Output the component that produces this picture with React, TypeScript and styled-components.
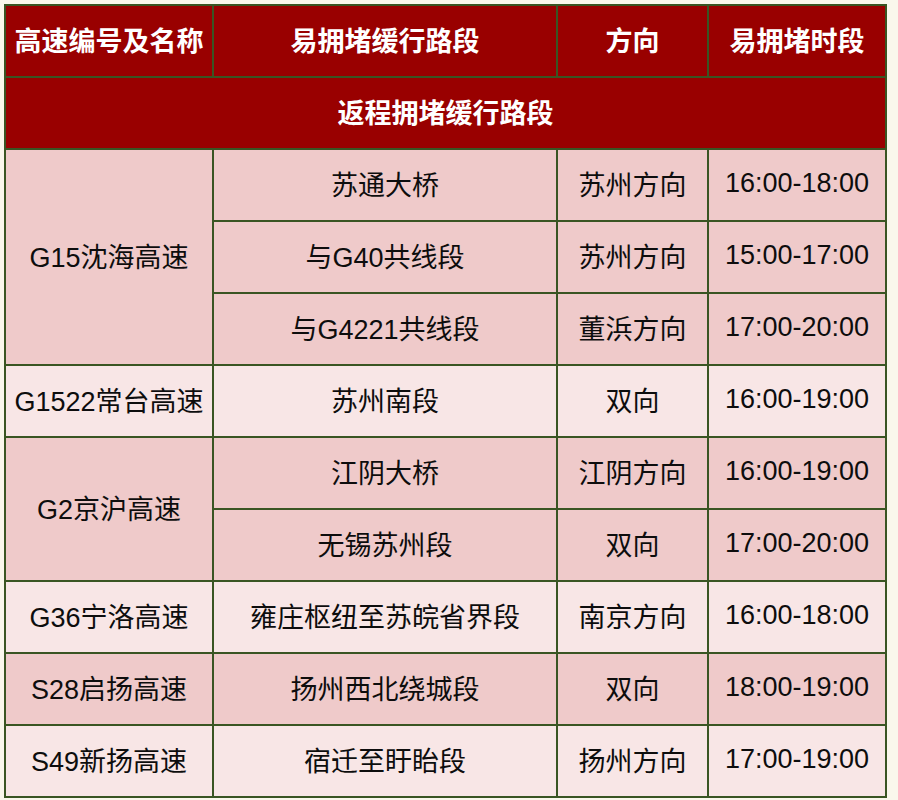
import React from 'react';
import styled, { createGlobalStyle } from 'styled-components';

type Row = {
  road?: string;
  span?: number;
  section: string;
  dir: string;
  time: string;
  light: boolean;
};

const rows: Row[] = [
  { road: 'G15沈海高速', span: 3, section: '苏通大桥', dir: '苏州方向', time: '16:00-18:00', light: false },
  { section: '与G40共线段', dir: '苏州方向', time: '15:00-17:00', light: false },
  { section: '与G4221共线段', dir: '董浜方向', time: '17:00-20:00', light: false },
  { road: 'G1522常台高速', section: '苏州南段', dir: '双向', time: '16:00-19:00', light: true },
  { road: 'G2京沪高速', span: 2, section: '江阴大桥', dir: '江阴方向', time: '16:00-19:00', light: false },
  { section: '无锡苏州段', dir: '双向', time: '17:00-20:00', light: false },
  { road: 'G36宁洛高速', section: '雍庄枢纽至苏皖省界段', dir: '南京方向', time: '16:00-18:00', light: true },
  { road: 'S28启扬高速', section: '扬州西北绕城段', dir: '双向', time: '18:00-19:00', light: false },
  { road: 'S49新扬高速', section: '宿迁至盱眙段', dir: '扬州方向', time: '17:00-19:00', light: true },
];

function App() {
  return (
    <>
      <GlobalStyle />
      <Page>
        <Table>
          <colgroup>
            <col style={{ width: 208 }} />
            <col style={{ width: 344 }} />
            <col style={{ width: 151 }} />
            <col style={{ width: 178 }} />
          </colgroup>
          <thead>
            <tr>
              <Head>高速编号及名称</Head>
              <Head>易拥堵缓行路段</Head>
              <Head>方向</Head>
              <Head>易拥堵时段</Head>
            </tr>
            <tr>
              <Head colSpan={4}>返程拥堵缓行路段</Head>
            </tr>
          </thead>
          <tbody>
            {rows.map((r, i) => (
              <tr key={i}>
                {r.road && (
                  <Cell $light={r.light} rowSpan={r.span ?? 1}>
                    {r.road}
                  </Cell>
                )}
                <Cell $light={r.light}>{r.section}</Cell>
                <Cell $light={r.light}>{r.dir}</Cell>
                <Cell $light={r.light}>{r.time}</Cell>
              </tr>
            ))}
          </tbody>
        </Table>
      </Page>
    </>
  );
}

export default App;

const GlobalStyle = createGlobalStyle`
  body {
    margin: 0;
    background: #faf7ec;
    font-family: "Liberation Sans", "Noto Sans CJK SC", sans-serif;
  }
`;

const Page = styled.div`
  width: 898px;
  height: 800px;
  padding: 4px 0 0 4px;
  box-sizing: border-box;
  background: #faf7ec;
  overflow: hidden;
`;

const Table = styled.table`
  width: 881px;
  border-collapse: collapse;
  table-layout: fixed;
  border: 2px solid #3a5523;
`;

const Head = styled.th`
  box-sizing: border-box;
  height: 72px;
  padding: 0 0 3px;
  border: 2px solid #3a5523;
  background: #990000;
  color: #ffffff;
  font-size: 27px;
  font-weight: bold;
  text-align: center;
  vertical-align: middle;
`;

const Cell = styled.td<{ $light: boolean }>`
  box-sizing: border-box;
  height: 72px;
  padding: 0 0 4px;
  border: 2px solid #3a5523;
  background: ${(p) => (p.$light ? '#f8e6e6' : '#efcaca')};
  color: #0d0d0d;
  font-size: 27px;
  text-align: center;
  vertical-align: middle;
  white-space: nowrap;
`;
